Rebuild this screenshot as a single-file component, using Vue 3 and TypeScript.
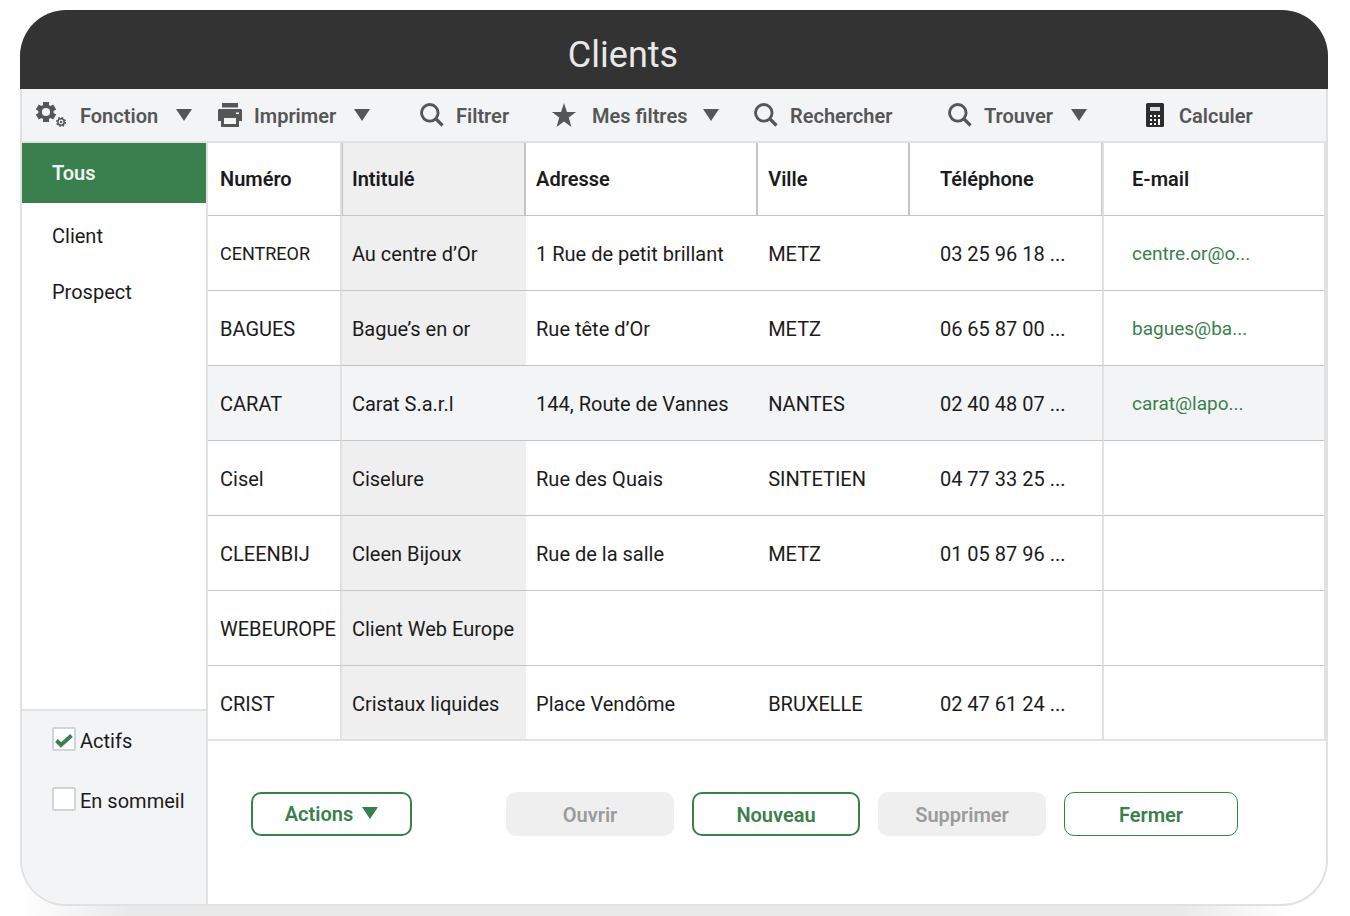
<script setup lang="ts">
import { ref } from 'vue'

type Icon = 'gears' | 'print' | 'search' | 'star' | 'calc'
interface Tool { label: string; icon: Icon; menu: boolean }
interface Client { code: string; name: string; address: string; city: string; phone: string; email: string }

const tools: Tool[] = [
  { label: 'Fonction', icon: 'gears', menu: true },
  { label: 'Imprimer', icon: 'print', menu: true },
  { label: 'Filtrer', icon: 'search', menu: false },
  { label: 'Mes filtres', icon: 'star', menu: true },
  { label: 'Rechercher', icon: 'search', menu: false },
  { label: 'Trouver', icon: 'search', menu: true },
  { label: 'Calculer', icon: 'calc', menu: false },
]

const clients: Client[] = [
  { code: 'CENTREOR', name: 'Au centre d’Or', address: '1 Rue de petit brillant', city: 'METZ', phone: '03 25 96 18 ...', email: 'centre.or@o...' },
  { code: 'BAGUES', name: 'Bague’s en or', address: 'Rue tête d’Or', city: 'METZ', phone: '06 65 87 00 ...', email: 'bagues@ba...' },
  { code: 'CARAT', name: 'Carat S.a.r.l', address: '144, Route de Vannes', city: 'NANTES', phone: '02 40 48 07 ...', email: 'carat@lapo...' },
  { code: 'Cisel', name: 'Ciselure', address: 'Rue des Quais', city: 'SINTETIEN', phone: '04 77 33 25 ...', email: '' },
  { code: 'CLEENBIJ', name: 'Cleen Bijoux', address: 'Rue de la salle', city: 'METZ', phone: '01 05 87 96 ...', email: '' },
  { code: 'WEBEUROPE', name: 'Client Web Europe', address: '', city: '', phone: '', email: '' },
  { code: 'CRIST', name: 'Cristaux liquides', address: 'Place Vendôme', city: 'BRUXELLE', phone: '02 47 61 24 ...', email: '' },
]

const categories = ['Tous', 'Client', 'Prospect']
const category = ref('Tous')
const selected = ref('CARAT')
const active = ref(true)
const dormant = ref(false)
</script>

<template>
  <div class="page">
    <main class="window">
      <header class="titlebar"><h1>Clients</h1></header>
      <div class="frame">
        <div class="toolbar" role="toolbar" aria-label="Outils">
          <button v-for="t in tools" :key="t.label" type="button" class="tool" :class="t.icon">
            <svg v-if="t.icon === 'gears'" class="icon wide" viewBox="0 0 32 26" aria-hidden="true">
              <path fill-rule="evenodd" d="M7 0h6v3l1.500.9L17.200 2.400l3 5.200L17.600 9.100v1.800l2.600 1.500-3 5.200-2.700-1.500-1.500.9v3H7v-3l-1.500-.9-2.700 1.500-3-5.200 2.600-1.500V9.100L-.2 7.600l3-5.200 2.700 1.500L7 3zM10 5.900a4.100 4.100 0 1 0 0 8.200 4.100 4.100 0 0 0 0-8.200z" />
              <circle cx="25" cy="20" r="3.200" fill="none" stroke="currentColor" stroke-width="1.500" />
              <circle cx="25" cy="20" r="4.300" fill="none" stroke="currentColor" stroke-width="1.500" stroke-dasharray="1.690 1.690" />
              <circle cx="25" cy="20" r="1.200" />
            </svg>
            <svg v-else-if="t.icon === 'print'" class="icon" viewBox="0 0 24 24" aria-hidden="true">
              <path fill-rule="evenodd" d="M4 0h16v4.500H4zM1 6h22l1 1v11h-3v6H3v-6H0V7zM6 15v6h12v-6zM18 9.500v1.500h3V9.500z" />
            </svg>
            <svg v-else-if="t.icon === 'search'" class="icon" viewBox="0 0 24 24" aria-hidden="true">
              <circle cx="9.800" cy="9.800" r="8.300" fill="none" stroke="currentColor" stroke-width="2.900" />
              <path d="M15.500 15.500l7 7" fill="none" stroke="currentColor" stroke-width="3.200" />
            </svg>
            <svg v-else-if="t.icon === 'star'" class="icon" viewBox="0 0 24 24" aria-hidden="true">
              <path d="M12 0l3 8.900h9l-7.200 5.600L19.400 24 12 18.500 4.600 24l2.600-9.500L0 8.900h9z" />
            </svg>
            <svg v-else class="icon" viewBox="0 0 24 24" aria-hidden="true">
              <rect x="3" width="18" height="24" rx="1.500" />
              <rect x="7" y="4" width="10" height="4" fill="#dcdcdc" />
              <g fill="#fff">
                <rect x="7" y="12" width="2" height="2" /><rect x="11" y="12" width="2" height="2" /><rect x="15" y="12" width="2" height="2" />
                <rect x="7" y="16" width="2" height="2" /><rect x="11" y="16" width="2" height="2" /><rect x="15" y="16" width="2" height="6" />
                <rect x="7" y="20" width="2" height="2" /><rect x="11" y="20" width="2" height="2" />
              </g>
            </svg>
            <span>{{ t.label }}</span>
            <svg v-if="t.menu" class="caret" viewBox="0 0 16 12" aria-hidden="true"><path d="M0 0h16L8 12z" /></svg>
          </button>
        </div>

        <div class="body">
          <aside class="sidebar">
            <nav class="categories">
              <button
                v-for="c in categories" :key="c" type="button"
                class="category" :class="{ current: c === category }" @click="category = c"
              >{{ c }}</button>
            </nav>
            <div class="filters">
              <label class="check">
                <span class="box">
                  <input v-model="active" type="checkbox">
                  <svg v-if="active" viewBox="0 0 24 24" aria-hidden="true"><path d="M4.500 13.500l4.500 4.500L19.500 8.500" /></svg>
                </span>
                <span class="text">Actifs</span>
              </label>
              <label class="check">
                <span class="box">
                  <input v-model="dormant" type="checkbox">
                  <svg v-if="dormant" viewBox="0 0 24 24" aria-hidden="true"><path d="M4.500 13.500l4.500 4.500L19.500 8.500" /></svg>
                </span>
                <span class="text">En sommeil</span>
              </label>
            </div>
          </aside>

          <section class="content">
            <div class="grid">
              <table>
                <colgroup>
                  <col class="c-code"><col class="c-name"><col class="c-address"><col class="c-city"><col class="c-phone"><col>
                </colgroup>
                <thead>
                  <tr>
                    <th scope="col" class="code">Numéro</th>
                    <th scope="col" class="name">Intitulé</th>
                    <th scope="col">Adresse</th>
                    <th scope="col">Ville</th>
                    <th scope="col" class="phone">Téléphone</th>
                    <th scope="col" class="email">E-mail</th>
                  </tr>
                </thead>
                <tbody>
                  <tr v-for="r in clients" :key="r.code" :class="{ selected: r.code === selected }" @click="selected = r.code">
                    <td class="code" :class="{ compact: r.code === 'CENTREOR' }">{{ r.code }}</td>
                    <td class="name">{{ r.name }}</td>
                    <td>{{ r.address }}</td>
                    <td>{{ r.city }}</td>
                    <td class="phone">{{ r.phone }}</td>
                    <td class="email"><a v-if="r.email" href="#">{{ r.email }}</a></td>
                  </tr>
                </tbody>
              </table>
            </div>
            <footer class="actions">
              <button type="button" class="btn menu">
                Actions
                <svg class="caret" viewBox="0 0 16 12" aria-hidden="true"><path d="M0 0h16L8 12z" /></svg>
              </button>
              <div class="group">
                <button type="button" class="btn" disabled>Ouvrir</button>
                <button type="button" class="btn">Nouveau</button>
                <button type="button" class="btn" disabled>Supprimer</button>
                <button type="button" class="btn thin">Fermer</button>
              </div>
            </footer>
          </section>
        </div>
      </div>
    </main>
  </div>
</template>

<style>
body { margin: 0; background: #fff; }
</style>

<style scoped>
* { box-sizing: border-box; }
.page {
  min-height: 100vh;
  display: flex;
  padding: 10px 22px 10px 20px;
  background: linear-gradient(90deg, transparent 20px, #e9e9e9 130px, #e9e9e9 calc(100% - 170px), transparent calc(100% - 60px)) bottom / 100% 40px no-repeat;
  font-family: Roboto, "Liberation Sans", sans-serif;
  font-size: 20px;
  line-height: 24px;
  color: #1b1b1b;
}
button { font: inherit; color: inherit; border: 0; margin: 0; background: none; cursor: pointer; }
.window { flex: 1; min-width: 0; display: flex; flex-direction: column; }
.titlebar {
  height: 79px;
  padding-top: 10px;
  padding-right: 102px;
  display: flex;
  align-items: center;
  justify-content: center;
  background: #333;
  border-radius: 46px 46px 0 0;
}
h1 { margin: 0; font-size: 36px; line-height: 44px; font-weight: 400; color: #e8e8e8; }
.frame {
  flex: 1;
  display: flex;
  flex-direction: column;
  background: #fff;
  border: 2px solid #e1e1e1;
  border-top: 0;
  border-radius: 0 0 46px 46px;
  overflow: hidden;
}
.toolbar {
  display: grid;
  grid-template-columns: 182fr 202fr 132fr 202fr 194fr 195fr 183fr;
  padding-left: 14px;
  height: 54px;
  background: #f3f4f6;
  border-bottom: 2px solid #e1e1e1;
}
.tool {
  display: flex;
  align-items: center;
  gap: 12px;
  min-width: 0;
  padding: 2px 0 0;
  font-weight: 600;
  color: #555756;
  white-space: nowrap;
}
.tool.star { gap: 16px; }
.icon { flex: none; width: 24px; height: 24px; margin-bottom: 2px; fill: currentColor; overflow: visible; }
.wide { width: 32px; height: 26px; }
.calc .icon { color: #2d2d2d; }
.caret { flex: none; width: 16px; height: 12px; margin: 0 0 2px; fill: currentColor; }
.tool .caret { margin-left: 6px; }
.tool.star .caret { margin-left: 0; }
.body { flex: 1; display: flex; }
.sidebar {
  flex: none;
  width: 186px;
  display: flex;
  flex-direction: column;
  border-right: 2px solid #e1e1e1;
}
.categories { flex: 1; display: flex; flex-direction: column; }
.category { height: 56px; padding: 0 30px; text-align: left; }
.category.current { height: 60px; margin-bottom: 5px; background: #39804d; color: #f0f4f1; font-weight: 600; }
.filters {
  display: flex;
  flex-direction: column;
  gap: 34px;
  padding: 16px 20px 91px 30px;
  background: #f3f4f6;
  border-top: 2px solid #e1e1e1;
}
.check { display: flex; align-items: flex-start; gap: 4px; white-space: nowrap; }
.text { padding-top: 2px; }
.box { display: grid; flex: none; }
.box > * { grid-area: 1 / 1; width: 24px; height: 24px; margin: 0; }
.box input { appearance: none; background: #fff; border: 2px solid #ccd6db; border-radius: 2px; }
.box svg { fill: none; stroke: #39804d; stroke-width: 4; stroke-linecap: butt; pointer-events: none; }
.content { flex: 1; min-width: 0; display: flex; flex-direction: column; }
.grid { border-right: 2px solid #e1e1e1; border-bottom: 2px solid #e1e1e1; }
table { width: 100%; table-layout: fixed; border-collapse: separate; border-spacing: 0; }
.c-code { width: 12%; }
.c-name { width: 16.5%; }
.c-address { width: 20.8%; }
.c-city { width: 13.6%; }
.c-phone { width: 17.4%; }
th, td {
  height: 75px;
  padding: 2px 0 0 10px;
  text-align: left;
  white-space: nowrap;
  border-bottom: 1px solid #c4c4c4;
}
th { height: 73px; padding-top: 0; font-weight: 600; border-right: 2px solid #c4c4c4; }
tbody tr:last-child td { height: 73px; border-bottom: 0; }
.code { padding-left: 12px; border-right: 2px solid #e1e1e1; }
.compact { font-size: 18px; }
.name { background: #efefef; }
th.name { box-shadow: inset 1px 0 #c4c4c4; }
.phone { padding-left: 30px; border-right: 2px solid #e1e1e1; }
th.phone { box-shadow: inset -1px 0 #c4c4c4; }
.email { padding-left: 28px; border-right: 0; }
td.email { font-size: 19px; }
.selected td { background: #f3f4f6; }
a { color: #39804d; text-decoration: none; }
.actions {
  display: flex;
  justify-content: space-between;
  align-items: center;
  padding: 51px 88px 68px 43px;
}
.group { display: flex; gap: 18px; }
.btn {
  display: flex;
  align-items: center;
  justify-content: center;
  gap: 9px;
  width: 168px;
  height: 44px;
  padding: 2px 0 0;
  font-weight: 600;
  color: #39804d;
  background: #fff;
  border: 2px solid #39804d;
  border-radius: 10px;
}
.btn.menu { width: 161px; padding-top: 0; }
.btn.thin { width: 174px; border-width: 1px; }
.btn:disabled { color: #9b9b9b; background: #efefef; border-color: #efefef; }
</style>
